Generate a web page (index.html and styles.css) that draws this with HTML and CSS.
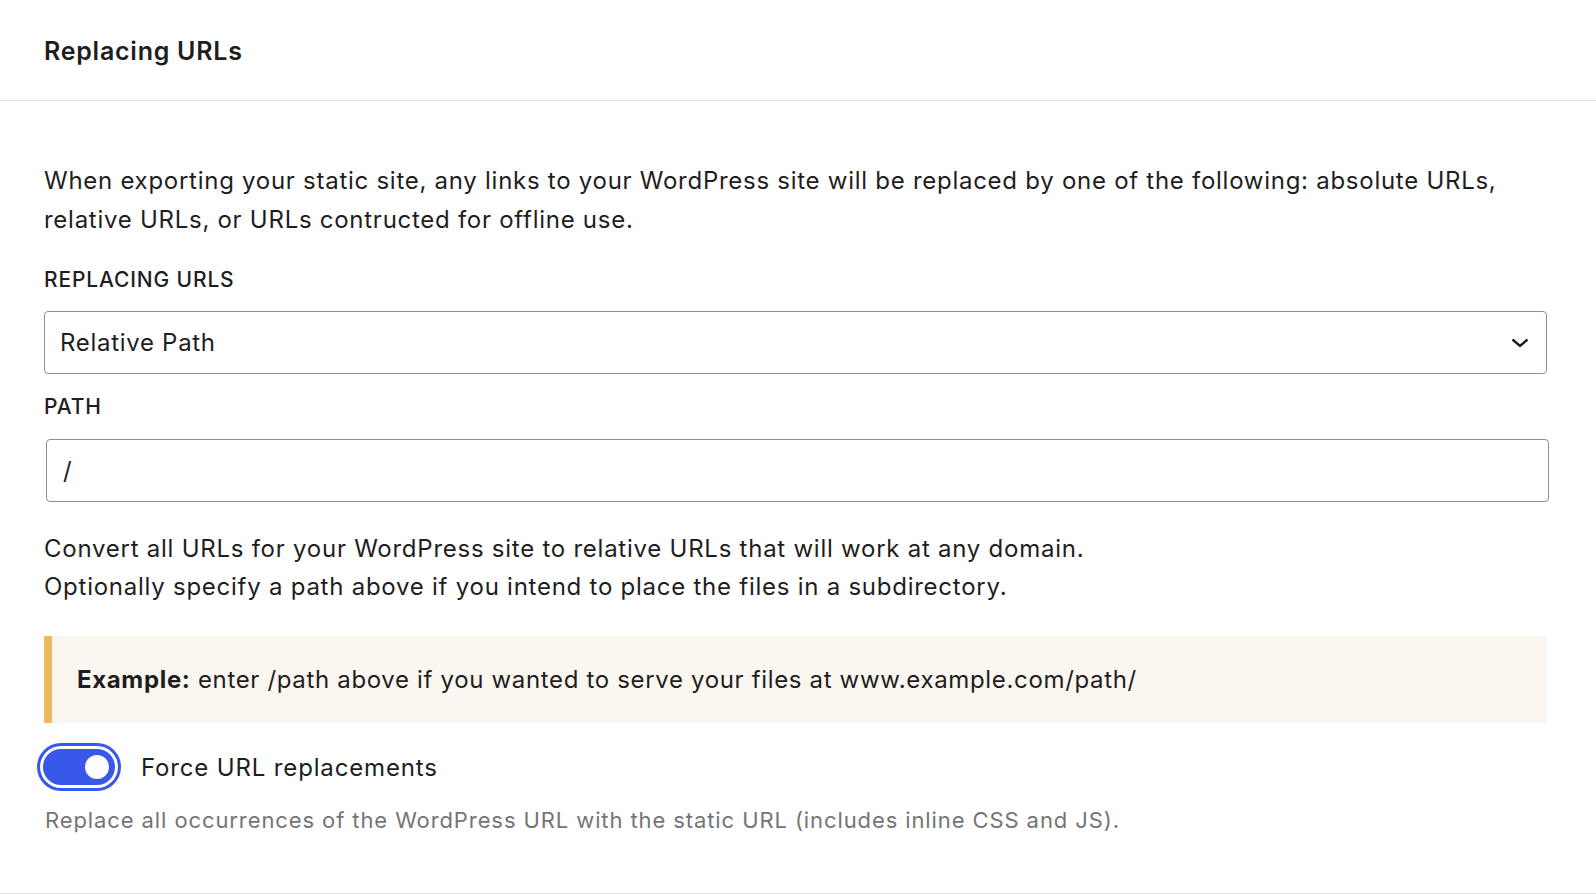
FILE: index.html
```html
<!DOCTYPE html>
<html lang="en">
<head>
<meta charset="utf-8">
<title>Replacing URLs</title>
<link rel="stylesheet" href="styles.css">
</head>
<body>
<div class="panel">
  <div class="panel-header">
    <h2 class="panel-title">Replacing URLs</h2>
  </div>
  <div class="panel-body">
    <p class="intro">When exporting your static site, any links to your WordPress site will be replaced by one of the following: absolute URLs, relative URLs, or URLs contructed for offline use.</p>

    <label class="field-label">Replacing URLs</label>
    <div class="select">
      <span class="select-value">Relative Path</span>
      <svg class="chevron" width="18" height="10" viewBox="0 0 18 10"><path d="M1.5 1.5 L9 8 L16.5 1.5" fill="none" stroke="#1e1e1e" stroke-width="2.4"/></svg>
    </div>

    <label class="field-label">Path</label>
    <div class="text-input">/</div>

    <p class="help">Convert all URLs for your WordPress site to relative URLs that will work at any domain.<br>Optionally specify a path above if you intend to place the files in a subdirectory.</p>

    <div class="notice"><strong>Example:</strong> enter /path above if you wanted to serve your files at www.example.com/path/</div>

    <div class="toggle-row">
      <span class="toggle"><span class="knob"></span></span>
      <span class="toggle-label">Force URL replacements</span>
    </div>
    <p class="toggle-help">Replace all occurrences of the WordPress URL with the static URL (includes inline CSS and JS).</p>
  </div>
</div>
</body>
</html>
```

FILE: styles.css
```css
* { box-sizing: border-box; }
html, body { margin: 0; padding: 0; background: #fff; }
body {
  font-family: Inter, "Noto Sans", "Liberation Sans", sans-serif;
  color: #1e1e1e;
  width: 1596px;
  height: 894px;
  overflow: hidden;
}
.panel {
  border-bottom: 1px solid #e0e0e0;
  height: 894px;
}
.panel-header {
  height: 101px;
  border-bottom: 1px solid #e0e0e0;
  padding: 2px 44px 0;
  display: flex;
  align-items: center;
}
.panel-title {
  margin: 0;
  font-size: 25px;
  font-weight: 600;
  line-height: 30px;
  letter-spacing: 0.75px;
}
.panel-body {
  padding: 60px 49px 0 44px;
  display: flex;
  flex-direction: column;
}
.intro {
  margin: 0;
  font-size: 24px;
  line-height: 39px;
  letter-spacing: 0.73px;
}
.field-label {
  display: block;
  margin-top: 26px;
  font-size: 21px;
  line-height: 30px;
  font-weight: 500;
  letter-spacing: 0.85px;
  text-transform: uppercase;
}
.select {
  margin-top: 16px;
  height: 63px;
  border: 1px solid #8f8f8f;
  border-radius: 4px;
  display: flex;
  align-items: center;
  justify-content: space-between;
  padding: 0 17px 0 15px;
  font-size: 24px;
  letter-spacing: 0.7px;
}
.select + .field-label { margin-top: 18px; }
.text-input {
  margin: 17px -2px 0 2px;
  height: 63px;
  border: 1px solid #8f8f8f;
  border-radius: 4px;
  padding: 0 16px;
  display: flex;
  align-items: center;
  font-size: 24px;
}
.help {
  margin: 28px 0 0;
  font-size: 24px;
  line-height: 38px;
  letter-spacing: 0.75px;
}
.notice {
  margin-top: 30px;
  height: 87px;
  background: #fbf7f0;
  border-left: 8px solid #ecb95c;
  padding: 0 25px;
  display: flex;
  align-items: center;
  font-size: 24px;
  letter-spacing: 0.66px;
  white-space: pre;
}
.notice strong { font-weight: 700; }
.toggle-row {
  margin-top: 26px;
  display: flex;
  align-items: center;
}
.toggle {
  width: 72px;
  height: 36px;
  margin-left: -1px;
  border-radius: 18px;
  background: #3858e9;
  box-shadow: 0 0 0 3px #fff, 0 0 0 6px #3858e9;
  display: flex;
  align-items: center;
  justify-content: flex-end;
  padding-right: 6px;
}
.knob {
  width: 24px;
  height: 24px;
  border-radius: 50%;
  background: #fff;
}
.toggle-label {
  margin-left: 26px;
  font-size: 24px;
  letter-spacing: 0.85px;
}
.toggle-help {
  margin: 20px 0 0 1px;
  font-size: 22px;
  line-height: 30px;
  letter-spacing: 0.9px;
  color: #757575;
}
```
